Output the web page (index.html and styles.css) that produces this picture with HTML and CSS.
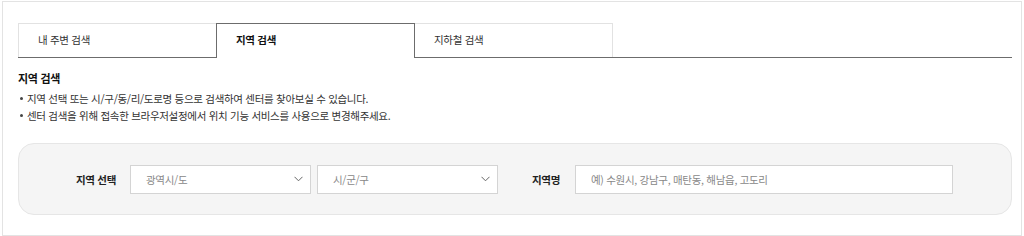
FILE: index.html
```html
<!DOCTYPE html>
<html lang="ko">
<head>
  <meta charset="UTF-8">
  <meta name="viewport" content="width=device-width, initial-scale=1.0">
  <title>센터 찾기 - 지역 검색</title>
<link rel="stylesheet" href="styles.css">
</head>
<body>
<div class="wrap">

  <ul class="tabs">
    <li class="tab">내 주변 검색</li>
    <li class="tab active">지역 검색</li>
    <li class="tab">지하철 검색</li>
  </ul>

  <h3 class="title">지역 검색</h3>
  <ul class="notes">
    <li>지역 선택 또는 시/구/동/리/도로명 등으로 검색하여 센터를 찾아보실 수 있습니다.</li>
    <li>센터 검색을 위해 접속한 브라우저설정에서 위치 기능 서비스를 사용으로 변경해주세요.</li>
  </ul>

  <div class="search-box">
    <span class="label label-area">지역 선택</span>
    <div class="select">
      <span>광역시/도</span>
      <svg width="9" height="6" viewBox="0 0 9 6"><path d="M0.5 0.8 L4.5 4.8 L8.5 0.8" fill="none" stroke="#666" stroke-width="1"/></svg>
    </div>
    <div class="select">
      <span>시/군/구</span>
      <svg width="9" height="6" viewBox="0 0 9 6"><path d="M0.5 0.8 L4.5 4.8 L8.5 0.8" fill="none" stroke="#666" stroke-width="1"/></svg>
    </div>
    <span class="label label-name">지역명</span>
    <input class="keyword" type="text" placeholder="예) 수원시, 강남구, 매탄동, 해남읍, 고도리">
  </div>

</div>
</body>
</html>
```

FILE: styles.css
```css
* {
  margin: 0;
  padding: 0;
  box-sizing: border-box;
}
body {
  font-family: "Noto Sans CJK KR", "Noto Sans", sans-serif;
  font-size: 10.5px;
  letter-spacing: -0.3px;
  color: #333;
  background: #fff;
}
ul {
  list-style: none;
}
.wrap {
  margin: 1px 2px 0 2px;
  border: 1px solid #e3e3e3;
  padding: 21px 9px 20px 15px;
}

/* tabs */
.tabs {
  display: flex;
  border-bottom: 1px solid #6c6c6c;
}
.tab {
  position: relative;
  width: 199px;
  height: 34px;
  margin-left: -1px;
  margin-bottom: -1px;
  padding-left: 19px;
  border: 1px solid #e2e2e2;
  border-bottom: none;
  line-height: 32px;
  color: #333;
  background: #fff;
}
.tab:first-child {
  margin-left: 0;
}
.tab.active {
  z-index: 1;
  height: 35px;
  border-color: #6c6c6c;
  font-weight: bold;
  color: #111;
}

/* description */
.title {
  margin-top: 12px;
  font-size: 11px;
  line-height: 16px;
  font-weight: bold;
  color: #111;
}
.notes {
  margin-top: 4px;
}
.notes li {
  position: relative;
  padding-left: 9px;
  line-height: 17px;
  color: #333;
}
.notes li::before {
  content: "";
  position: absolute;
  left: 2px;
  top: 7px;
  width: 3px;
  height: 3px;
  border-radius: 50%;
  background: #444;
}

/* search box */
.search-box {
  display: flex;
  align-items: center;
  height: 72px;
  margin-top: 19px;
  padding-left: 57px;
  background: #f5f5f5;
  border: 1px solid #e6e6e6;
  border-radius: 16px;
}
.label {
  font-weight: bold;
  color: #222;
}
.label-area {
  width: 54px;
}
.label-name {
  width: 43px;
  margin-left: 34px;
}
.select {
  display: flex;
  align-items: center;
  justify-content: space-between;
  width: 181px;
  height: 29px;
  padding: 0 7px 0 15px;
  margin-right: 6px;
  background: #fff;
  border: 1px solid #d4d4d4;
  color: #888;
}
.select:last-of-type {
  margin-right: 0;
}
.keyword {
  width: 378px;
  height: 29px;
  padding-left: 15px;
  border: 1px solid #d4d4d4;
  background: #fff;
  font-family: inherit;
  font-size: 10.5px;
  letter-spacing: -0.3px;
  color: #333;
  outline: none;
}
.keyword::placeholder {
  color: #888;
}
```
